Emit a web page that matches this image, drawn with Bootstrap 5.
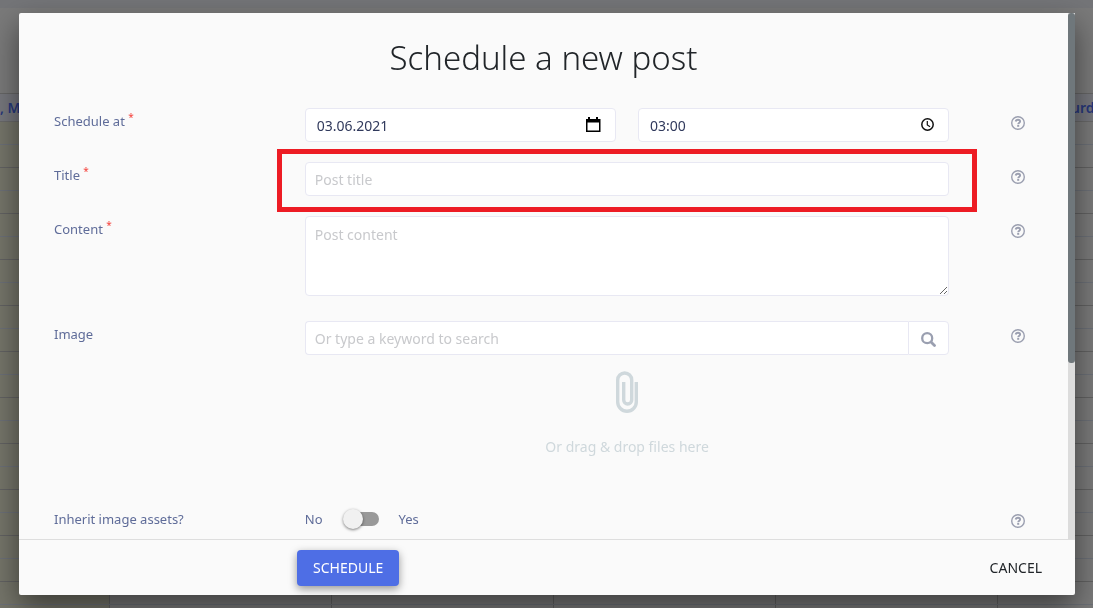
<!DOCTYPE html>
<html lang="en">
<head>
<meta charset="utf-8">
<meta name="viewport" content="width=device-width, initial-scale=1">
<title>Schedule a new post</title>
<link href="https://cdn.jsdelivr.net/npm/bootstrap@5.3.0/dist/css/bootstrap.min.css" rel="stylesheet">
<style>
  body { font-family: "Noto Sans", "Open Sans", sans-serif; font-size: 14px; background: #7a7a7a; height: 100vh; overflow: hidden; }

  /* dimmed calendar page */
  .page-bar { height: 8px; background: #747578; }
  .page-head { height: 85px; }
  .calendar { width: 1220px; table-layout: fixed; border-collapse: collapse; }
  .calendar th { height: 28px; padding: 0; background: #76777d; border-top: 1px solid #666; border-bottom: 1px solid #696969; color: #27377b; font-size: 14px; font-weight: 600; white-space: nowrap; }
  .calendar td { height: 23px; padding: 0; border-bottom: 1px solid #6c7077; border-right: 1px solid #626262; }
  .calendar tr:nth-child(even) td { border-bottom-color: #626262; }
  .calendar td:first-child { background: #75756a; }
  .calendar .day-first { width: 109px; }
  .calendar .day-last { padding-left: 52px; }

  /* dialog */
  .post-dialog { margin: 13px 18px 13px 19px; max-width: none; height: calc(100% - 26px); }
  .post-dialog .modal-content { height: 100%; background: #fafafa; border: 0; border-radius: 2px; box-shadow: 0 12px 30px rgba(0,0,0,.5); }
  .post-form { padding: 25px 35px 0; }
  .post-title { font-size: 33px; line-height: 40px; font-weight: 300; color: #212529; margin-bottom: 30px; }
  .scroll-track { width: 7px; background: #dcdcdc; }
  .scroll-thumb { height: 350px; max-height: 100%; background: #6f777b; border-radius: 3px; }
  .field-row { margin-bottom: 20px; }
  .field-name { color: #5f6c99; font-size: 13px; line-height: 26px; }
  .req { color: #f5423c; font-size: 10px; line-height: 12px; top: -5px; }
  .field-box { height: 34px; padding: 0 9px; font-size: 14px; color: #30395c; background: #fff; border: 1px solid #e8e8f3; border-radius: 4px; }
  .field-box::placeholder { color: #c8c9cc; }
  .picker-box { padding-left: 11px; }
  textarea.field-box { height: 80px; padding: 7px 9px; margin-bottom: 5px; }
  .gap-pair { gap: 22px; }
  .box-icon { right: 14px; top: 8px; }
  .search-btn { width: 41px; background: #fff; border: 1px solid #e8e8f3; border-radius: 0 4px 4px 0; color: #9a9fb0; }
  .help-btn { color: #9b9fb0; margin: 6px 8px 0 0; line-height: 0; }
  .highlight-frame { inset: -13px -16px -16px; border: 5px solid #ed1c24; pointer-events: none; }
  .drop-zone { color: #cfd8dc; padding-top: 16px; height: 131px; }
  .drop-zone svg { margin-bottom: 21px; }
  .toggle { appearance: none; width: 34px; height: 14px; margin: 0 20px 0 22px; border-radius: 7px; background: #999; position: relative; }
  .toggle::before { content: ""; position: absolute; left: -2px; top: -3px; width: 20px; height: 20px; border-radius: 50%; background: #f1f1f1; box-shadow: 0 1px 3px rgba(0,0,0,.5); }
  .post-footer { height: 56px; border-top: 1px solid #dedede; padding: 0 17px 0 278px; }
  .btn-schedule { background: #4e6ee5; color: #fff; font-size: 14px; height: 36px; padding: 0 15px; border-radius: 4px; box-shadow: 0 3px 9px rgba(0,0,0,.4); }
  .btn-cancel { color: #212529; font-size: 14px; height: 36px; padding: 0 15px; }
</style>
</head>
<body>
<svg width="0" height="0" class="position-absolute" aria-hidden="true">
  <symbol id="help" viewBox="0 0 14 14">
    <circle cx="7" cy="7" r="6.300" fill="none" stroke="currentColor" stroke-width="1.400"/>
    <path d="M4.700 5.500C4.900 4.200 5.800 3.800 7 3.800c1.300 0 2.100.6 2.100 1.600C9.100 6.700 7.200 6.700 7.200 8.300" fill="none" stroke="currentColor" stroke-width="1.900"/>
    <path d="M6.200 9h2v1.800h-2z" fill="currentColor"/>
  </symbol>
</svg>

<div class="vw-100 vh-100 overflow-hidden">
<div class="page-bar"></div>
<div class="page-head"></div>
<table class="calendar">
  <thead><tr><th class="day-first">, Mon</th><th></th><th></th><th></th><th></th><th class="day-last">Saturd</th></tr></thead>
  <tbody id="slots"></tbody>
</table>
</div>

<div class="modal d-block" role="dialog" aria-labelledby="dialogTitle">
  <div class="modal-dialog post-dialog">
    <div class="modal-content overflow-visible">
      <div class="d-flex flex-grow-1 overflow-hidden">
        <form class="post-form flex-grow-1 overflow-hidden" id="postForm">
          <h1 class="post-title text-center" id="dialogTitle">Schedule a new post</h1>

          <div class="row field-row">
            <div class="col-3"><label class="field-name" for="date">Schedule at <sup class="req">*</sup></label></div>
            <div class="col-8 d-flex gap-pair">
              <div class="position-relative flex-fill">
                <input class="field-box picker-box w-100" id="date" type="text" value="03.06.2021">
                <svg class="position-absolute box-icon" width="16" height="17" viewBox="0 0 16 17"><path d="M2 1h2v2h6V1h2v2h2.500v13H0V3h2zM1.500 6.500v8H13v-8z" fill-rule="evenodd"/></svg>
              </div>
              <div class="position-relative flex-fill">
                <input class="field-box picker-box w-100" type="text" value="03:00" aria-label="Time">
                <svg class="position-absolute box-icon" width="14" height="16" viewBox="0 0 14 16" fill="none" stroke="#111" stroke-width="1.500"><circle cx="6.500" cy="8.500" r="5.700"/><path d="M6.300 5v4l2.800 1.700" stroke-width="1.200"/></svg>
              </div>
            </div>
            <div class="col-1 text-end"><button class="btn p-0 border-0 help-btn" type="button" aria-label="Help"><svg width="14" height="14"><use href="#help"/></svg></button></div>
          </div>

          <div class="row field-row">
            <div class="col-3"><label class="field-name" for="title">Title <sup class="req">*</sup></label></div>
            <div class="col-8 position-relative">
              <input class="field-box w-100" id="title" type="text" placeholder="Post title">
              <div class="position-absolute highlight-frame"></div>
            </div>
            <div class="col-1 text-end"><button class="btn p-0 border-0 help-btn" type="button" aria-label="Help"><svg width="14" height="14"><use href="#help"/></svg></button></div>
          </div>

          <div class="row field-row">
            <div class="col-3"><label class="field-name" for="content">Content <sup class="req">*</sup></label></div>
            <div class="col-8"><textarea class="field-box w-100 d-block" id="content" placeholder="Post content"></textarea></div>
            <div class="col-1 text-end"><button class="btn p-0 border-0 help-btn" type="button" aria-label="Help"><svg width="14" height="14"><use href="#help"/></svg></button></div>
          </div>

          <div class="row field-row">
            <div class="col-3"><label class="field-name" for="image">Image</label></div>
            <div class="col-8">
              <div class="d-flex">
                <input class="field-box flex-fill rounded-end-0 border-end-0" id="image" type="text" placeholder="Or type a keyword to search">
                <button class="search-btn p-0" type="button" aria-label="Search"><svg width="15" height="15" viewBox="0 0 15 15" fill="none" stroke="currentColor"><circle cx="6.200" cy="6.200" r="5" stroke-width="2.300"/><path d="M10 10l3.500 3.500" stroke-width="2.800" stroke-linecap="round"/></svg></button>
              </div>
              <div class="drop-zone d-flex flex-column align-items-center">
                <svg width="22" height="44" viewBox="1 0 22 44" fill="none" stroke="currentColor" stroke-width="3.400"><path d="M21.300 11v20a9.300 9.300 0 0 1-18.600 0V9a7 7 0 0 1 14 0v20a4 4 0 0 1-8 0V11"/></svg>
                <span>Or drag &amp; drop files here</span>
              </div>
            </div>
            <div class="col-1 text-end"><button class="btn p-0 border-0 help-btn" type="button" aria-label="Help"><svg width="14" height="14"><use href="#help"/></svg></button></div>
          </div>

          <div class="row">
            <div class="col-3"><label class="field-name" for="inherit">Inherit image assets?</label></div>
            <div class="col-8 d-flex align-items-start field-name"><span>No</span><input class="toggle align-self-center" id="inherit" type="checkbox" role="switch"><span>Yes</span></div>
            <div class="col-1 text-end"><button class="btn p-0 border-0 help-btn" type="button" aria-label="Help"><svg width="14" height="14"><use href="#help"/></svg></button></div>
          </div>
        </form>
        <div class="scroll-track flex-shrink-0"><div class="scroll-thumb"></div></div>
      </div>
      <div class="post-footer d-flex align-items-center justify-content-between flex-shrink-0">
        <button class="btn btn-schedule" type="submit" form="postForm">SCHEDULE</button>
        <button class="btn btn-cancel" type="button">CANCEL</button>
      </div>
    </div>
  </div>
</div>

<script src="https://cdn.jsdelivr.net/npm/bootstrap@5.3.0/dist/js/bootstrap.bundle.min.js"></script>
<script>
  document.getElementById('slots').innerHTML = ('<tr>' + '<td></td>'.repeat(6) + '</tr>').repeat(22);
</script>
</body>
</html>
